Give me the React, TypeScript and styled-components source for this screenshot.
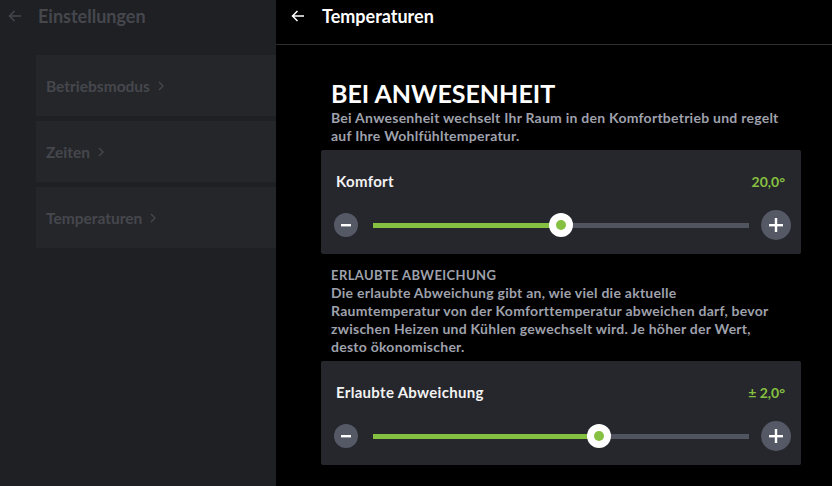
import React from 'react'
import { styled, createGlobalStyle } from 'styled-components'

const GlobalStyle = createGlobalStyle`
  html, body {
    margin: 0;
    padding: 0;
    background: #000;
    font-family: Lato, "Open Sans", "Liberation Sans", sans-serif;
  }
  * { box-sizing: border-box; }
`;

const Screen = styled.div`
  display: flex;
  width: 832px;
  height: 486px;
  overflow: hidden;
  background: #000;
`;

const SidePanel = styled.aside`
  width: 276px;
  flex-shrink: 0;
  background: #1f2024;
  display: flex;
  flex-direction: column;
`;

const Header = styled.header<{ $dim?: boolean }>`
  height: 45px;
  flex-shrink: 0;
  display: flex;
  align-items: center;
  gap: ${p => (p.$dim ? '16px' : '17px')};
  padding: 0 0 13px ${p => (p.$dim ? '8px' : '15px')};
  border-bottom: 1px solid ${p => (p.$dim ? 'transparent' : '#2c2d31')};
  color: ${p => (p.$dim ? '#45474d' : '#fff')};
`;

const HeaderTitle = styled.h1`
  margin: 0;
  font-size: 18px;
  line-height: 20px;
  font-weight: 700;
`;

const SideList = styled.div`
  display: flex;
  flex-direction: column;
  gap: 5px;
  padding: 10px 0 0 36px;
`;

const SideItem = styled.div`
  height: 61px;
  background: #25262a;
  display: flex;
  align-items: center;
  gap: 8px;
  padding-left: 10px;
  color: #45474d;
  font-size: 15.5px;
  font-weight: 700;
`;

const Main = styled.main`
  flex: 1;
  display: flex;
  flex-direction: column;
`;

const Content = styled.div`
  padding: 33px 31px 0 45px;
  display: flex;
  flex-direction: column;
`;

const Title = styled.h2`
  margin: 0 0 1px 10px;
  font-size: 25px;
  line-height: 30px;
  font-weight: 700;
  color: #fff;
`;

const SectionLabel = styled.div`
  margin: 12px 0 0 10px;
  font-size: 13px;
  line-height: 18px;
  font-weight: 700;
  letter-spacing: 0.4px;
  color: #9fa1ac;
`;

const Description = styled.p`
  margin: 0 0 5px 10px;
  font-size: 14px;
  line-height: 18px;
  font-weight: 700;
  letter-spacing: 0.25px;
  color: #9fa1ac;
`;

const Card = styled.section`
  width: 480px;
  height: 104px;
  background: #26272c;
  border-radius: 2px;
  padding: 21px 16px 0 15px;
  display: flex;
  flex-direction: column;
`;

const CardHead = styled.div`
  height: 20px;
  display: flex;
  align-items: center;
  justify-content: space-between;
  margin-bottom: 19px;
`;

const CardLabel = styled.span`
  font-size: 15px;
  font-weight: 700;
  letter-spacing: 0.3px;
  color: #f2f2f2;
`;

const CardValue = styled.span`
  font-size: 14px;
  font-weight: 700;
  color: #86c040;
`;

const SliderRow = styled.div`
  height: 30px;
  display: flex;
  align-items: center;
  margin: 0 -6px 0 -2px;
`;

const RoundButton = styled.button<{ $size: number }>`
  width: ${p => p.$size}px;
  height: ${p => p.$size}px;
  border-radius: 50%;
  border: none;
  padding: 0;
  background: #555966;
  color: #fff;
  display: flex;
  align-items: center;
  justify-content: center;
  flex-shrink: 0;
`;

const Track = styled.div`
  position: relative;
  flex: 1;
  height: 5px;
  margin: 0 12px 0 15px;
  background: #50545e;
`;

const Fill = styled.div`
  position: absolute;
  left: 0;
  top: 0;
  bottom: 0;
  background: #86c040;
`;

const Thumb = styled.div`
  position: absolute;
  top: 50%;
  width: 24px;
  height: 24px;
  margin: -12px 0 0 -12px;
  border-radius: 50%;
  background: #fff;
  display: flex;
  align-items: center;
  justify-content: center;

  &::after {
    content: '';
    width: 10px;
    height: 10px;
    border-radius: 50%;
    background: #86c040;
  }
`;

const BackArrow = () => (
  <svg width="14" height="12" viewBox="0 0 14 12" fill="none" stroke="currentColor" strokeWidth="1.5">
    <path d="M13 6H1.5M6.5 1L1.5 6l5 5" />
  </svg>
);

const Chevron = () => (
  <svg width="6" height="10" viewBox="0 0 6 10" fill="none" stroke="currentColor" strokeWidth="1.3">
    <path d="M1 1l4 4-4 4" />
  </svg>
);

const Minus = () => (
  <svg width="10" height="10" viewBox="0 0 10 10">
    <rect x="0" y="4" width="10" height="2.4" fill="#fff" />
  </svg>
);

const Plus = () => (
  <svg width="14" height="14" viewBox="0 0 14 14">
    <rect x="0" y="6" width="14" height="2.4" fill="#fff" />
    <rect x="5.8" y="0" width="2.4" height="14" fill="#fff" />
  </svg>
);

function SliderCard({ label, value, percent }: { label: string; value: string; percent: number }) {
  return (
    <Card>
      <CardHead>
        <CardLabel>{label}</CardLabel>
        <CardValue>{value}</CardValue>
      </CardHead>
      <SliderRow>
        <RoundButton $size={24} aria-label="weniger"><Minus /></RoundButton>
        <Track>
          <Fill style={{ width: `${percent}%` }} />
          <Thumb style={{ left: `${percent}%` }} />
        </Track>
        <RoundButton $size={30} aria-label="mehr"><Plus /></RoundButton>
      </SliderRow>
    </Card>
  );
}

export default function App() {
  return (
    <>
      <GlobalStyle />
      <Screen>
        <SidePanel>
          <Header $dim>
            <BackArrow />
            <HeaderTitle>Einstellungen</HeaderTitle>
          </Header>
          <SideList>
            <SideItem>Betriebsmodus <Chevron /></SideItem>
            <SideItem>Zeiten <Chevron /></SideItem>
            <SideItem>Temperaturen <Chevron /></SideItem>
          </SideList>
        </SidePanel>
        <Main>
          <Header>
            <BackArrow />
            <HeaderTitle>Temperaturen</HeaderTitle>
          </Header>
          <Content>
            <Title>BEI ANWESENHEIT</Title>
            <Description>
              Bei Anwesenheit wechselt Ihr Raum in den Komfortbetrieb und regelt
              <br />
              auf Ihre Wohlfühltemperatur.
            </Description>
            <SliderCard label="Komfort" value="20,0°" percent={50} />
            <SectionLabel>ERLAUBTE ABWEICHUNG</SectionLabel>
            <Description>
              Die erlaubte Abweichung gibt an, wie viel die aktuelle
              <br />
              Raumtemperatur von der Komforttemperatur abweichen darf, bevor
              <br />
              zwischen Heizen und Kühlen gewechselt wird. Je höher der Wert,
              <br />
              desto ökonomischer.
            </Description>
            <SliderCard label="Erlaubte Abweichung" value="± 2,0°" percent={60} />
          </Content>
        </Main>
      </Screen>
    </>
  );
}
